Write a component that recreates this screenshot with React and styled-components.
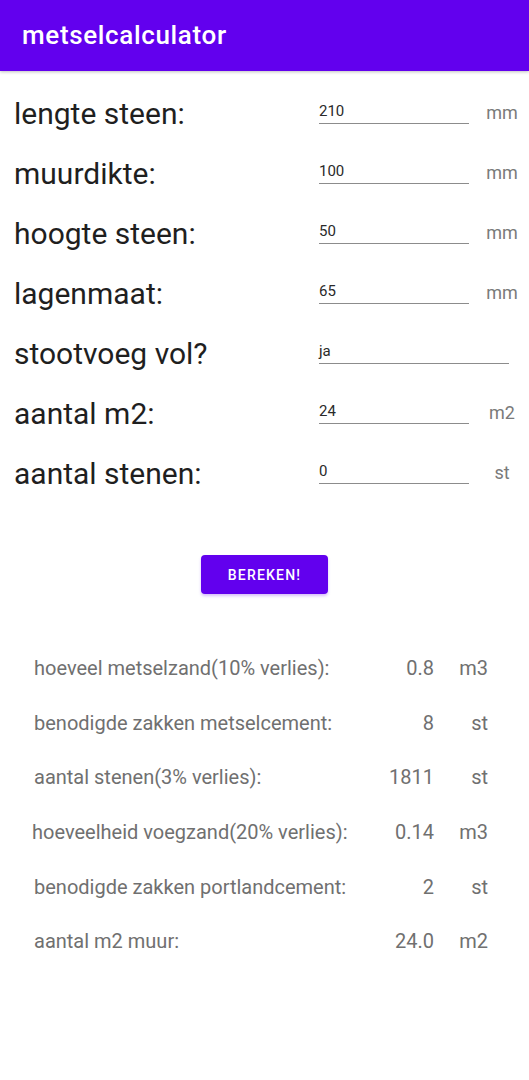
import React from "react";
import styled, { createGlobalStyle } from "styled-components";

const Global = createGlobalStyle`
  html, body { margin: 0; padding: 0; background: #ffffff; }
  body { font-family: Roboto, "Noto Sans", "Liberation Sans", sans-serif; }
  * { box-sizing: border-box; }
`;

const Page = styled.div`
  width: 529px;
  min-height: 1080px;
  background: #fff;
  display: flex;
  flex-direction: column;
`;

const AppBar = styled.header`
  height: 71px;
  background: #6200ee;
  display: flex;
  align-items: center;
  padding: 0 0 2px 22px;
  box-shadow: 0 1px 3px rgba(0, 0, 0, 0.25);
  position: relative;
  z-index: 1;
`;

const Title = styled.h1`
  margin: 0;
  color: #fff;
  font-size: 26px;
  font-weight: 500;
  letter-spacing: 0.65px;
`;

const Form = styled.section`
  display: flex;
  flex-direction: column;
  padding-top: 12px;
`;

const InputRow = styled.div`
  height: 60px;
  display: flex;
  align-items: center;
  padding-left: 14px;
`;

const Label = styled.span`
  flex: 0 0 305px;
  font-size: 30px;
  color: #1f1f1f;
  white-space: nowrap;
`;

const Field = styled.div`
  align-self: flex-start;
  margin-top: 12px;
  width: ${(p) => p.$width}px;
  height: 29px;
  border-bottom: 1.5px solid #8c8c8c;
  display: flex;
  align-items: flex-end;
  padding-bottom: 3px;
  font-size: 15px;
  color: #2a2a2a;
`;

const Unit = styled.span`
  width: 40px;
  margin-left: 13px;
  text-align: center;
  font-size: 18px;
  color: #7a7a7a;
  margin-top: -2px;
`;

const ButtonWrap = styled.div`
  display: flex;
  justify-content: center;
  margin-top: 52px;
`;

const Button = styled.button`
  width: 127px;
  height: 39px;
  border: none;
  border-radius: 4px;
  background: #6200ee;
  color: #fff;
  font-family: Roboto, "Noto Sans", sans-serif;
  font-size: 14px;
  font-weight: 500;
  letter-spacing: 1.2px;
  box-shadow: 0 2px 3px rgba(98, 0, 238, 0.25);
`;

const Results = styled.section`
  margin-top: 47px;
  display: flex;
  flex-direction: column;
`;

const ResultRow = styled.div`
  height: 54.6px;
  display: flex;
  align-items: center;
  padding: 0 41px 0 ${(p) => p.$indent ?? 34}px;
  font-size: 20px;
  color: #707070;
`;

const ResultLabel = styled.span`
  flex: 1;
  white-space: nowrap;
`;

const ResultValue = styled.span`
  width: 80px;
  text-align: right;
`;

const ResultUnit = styled.span`
  width: 54px;
  text-align: right;
`;

const inputs = [
  { label: "lengte steen:", value: "210", unit: "mm" },
  { label: "muurdikte:", value: "100", unit: "mm" },
  { label: "hoogte steen:", value: "50", unit: "mm" },
  { label: "lagenmaat:", value: "65", unit: "mm" },
  { label: "stootvoeg vol?", value: "ja", unit: null },
  { label: "aantal m2:", value: "24", unit: "m2" },
  { label: "aantal stenen:", value: "0", unit: "st" },
];

const results = [
  { label: "hoeveel metselzand(10% verlies):", value: "0.8", unit: "m3" },
  { label: "benodigde zakken metselcement:", value: "8", unit: "st" },
  { label: "aantal stenen(3% verlies):", value: "1811", unit: "st" },
  { label: "hoeveelheid voegzand(20% verlies):", value: "0.14", unit: "m3", indent: 32 },
  { label: "benodigde zakken portlandcement:", value: "2", unit: "st" },
  { label: "aantal m2 muur:", value: "24.0", unit: "m2" },
];

export default function App() {
  return (
    <Page>
      <Global />
      <AppBar>
        <Title>metselcalculator</Title>
      </AppBar>
      <Form>
        {inputs.map((r) => (
          <InputRow key={r.label}>
            <Label>{r.label}</Label>
            <Field $width={r.unit ? 150 : 190}>{r.value}</Field>
            {r.unit && <Unit>{r.unit}</Unit>}
          </InputRow>
        ))}
      </Form>
      <ButtonWrap>
        <Button>BEREKEN!</Button>
      </ButtonWrap>
      <Results>
        {results.map((r) => (
          <ResultRow key={r.label} $indent={r.indent}>
            <ResultLabel>{r.label}</ResultLabel>
            <ResultValue>{r.value}</ResultValue>
            <ResultUnit>{r.unit}</ResultUnit>
          </ResultRow>
        ))}
      </Results>
    </Page>
  );
}
